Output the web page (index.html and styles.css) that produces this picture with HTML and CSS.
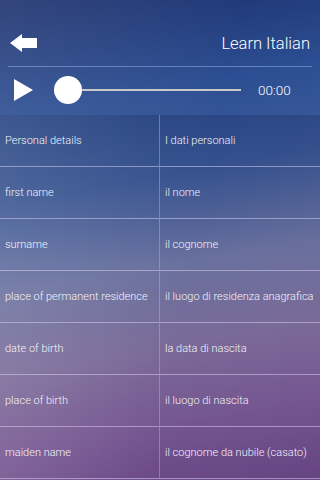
FILE: index.html
```html
<!DOCTYPE html>
<html>
<head>
<meta charset="utf-8">
<link rel="stylesheet" href="styles.css">
</head>
<body>
<div class="app">
  <div class="header">
    <div class="topbar">
      <svg class="back" width="28" height="18" viewBox="0 0 28 18">
        <path d="M0 9 L12 0 L12 4 L27 4 L27 14 L12 14 L12 18 Z" fill="#fff"/>
      </svg>
      <div class="title">Learn Italian</div>
    </div>
    <div class="player">
      <svg class="play" width="19" height="22" viewBox="0 0 19 22">
        <path d="M0 0 L19 11 L0 22 Z" fill="#fff"/>
      </svg>
      <div class="slider">
        <div class="knob"></div>
        <div class="track"></div>
      </div>
      <div class="time">00:00</div>
    </div>
  </div>
  <div class="table">
    <div class="cell left">Personal details</div><div class="cell">I dati personali</div>
    <div class="cell left">first name</div><div class="cell">il nome</div>
    <div class="cell left">surname</div><div class="cell">il cognome</div>
    <div class="cell left">place of permanent residence</div><div class="cell">il luogo di residenza anagrafica</div>
    <div class="cell left">date of birth</div><div class="cell">la data di nascita</div>
    <div class="cell left">place of birth</div><div class="cell">il luogo di nascita</div>
    <div class="cell left">maiden name</div><div class="cell">il cognome da nubile (casato)</div>
  </div>
</div>
</body>
</html>
```
FILE: styles.css
```css
html, body {
  margin: 0;
  padding: 0;
}
body {
  width: 320px;
  height: 480px;
  overflow: hidden;
  font-family: Roboto, "Liberation Sans", Arial, sans-serif;
  color: #fff;
}
.app {
  width: 320px;
  height: 480px;
  overflow: hidden;
  background:
    linear-gradient(100deg, rgba(255,255,255,0.10) 0%, rgba(255,255,255,0) 60%),
    linear-gradient(170deg, #1b2f6c 0%, #2c4e92 22%, #3d5c9c 38%, #6f76a4 55%, #80709e 70%, #7a5a96 85%, #6a4686 100%);
}
.header {
  height: 115px;
  display: flex;
  flex-direction: column;
}
.topbar {
  height: 67px;
  margin: 0 8px;
  border-bottom: 1px solid rgba(150, 175, 225, 0.55);
  display: flex;
  align-items: center;
  justify-content: space-between;
  box-sizing: border-box;
  padding: 20px 2px 0 2px;
}
.back {
  display: block;
}
.title {
  font-size: 16.5px;
  font-weight: 300;
}
.player {
  flex: 1;
  display: flex;
  align-items: center;
  padding: 0 0 0 14px;
  margin-bottom: 2px;
}
.play {
  display: block;
}
.slider {
  display: flex;
  align-items: center;
  margin-left: 21px;
  width: 187px;
}
.knob {
  width: 28px;
  height: 28px;
  border-radius: 50%;
  background: #fff;
  flex: none;
}
.track {
  height: 2px;
  flex: 1;
  background: #c9c9cc;
}
.time {
  margin-left: 17px;
  font-size: 13.5px;
  font-weight: 300;
}
.table {
  display: grid;
  grid-template-columns: 160px 160px;
  grid-auto-rows: 52px;
  background: linear-gradient(180deg, rgba(0,10,50,0.18) 0%, rgba(0,10,50,0.05) 40%, rgba(40,0,60,0.06) 100%);
}
.cell {
  display: flex;
  align-items: center;
  padding: 0 0 0 5px;
  font-size: 11px;
  font-weight: 300;
  border-bottom: 1px solid rgba(215, 205, 240, 0.55);
  box-sizing: border-box;
  white-space: nowrap;
  color: #f4f4fa;
}
.cell.left {
  border-right: 1px solid rgba(170, 170, 230, 0.45);
  background: linear-gradient(90deg, rgba(255,255,255,0.05), rgba(255,255,255,0.0));
}
```
